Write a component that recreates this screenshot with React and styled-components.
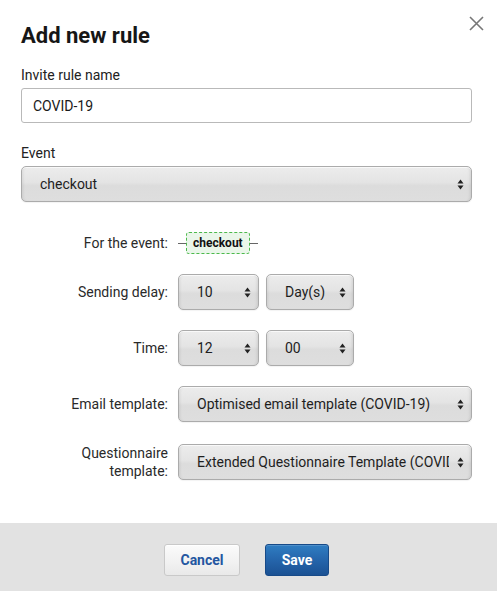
import React from "react";
import styled, { createGlobalStyle } from "styled-components";

const Global = createGlobalStyle`
  html, body { margin: 0; padding: 0; background: #fff; }
  body { font-family: Roboto, "Liberation Sans", Arial, sans-serif; color: #222; }
  * { box-sizing: border-box; }
`;

const Dialog = styled.div`
  position: relative;
  width: 497px;
  min-height: 591px;
  display: flex;
  flex-direction: column;
  background: #fff;
`;

const Body = styled.div`
  flex: 1;
  padding: 23px 25px 43px 21px;
  display: flex;
  flex-direction: column;
`;

const Title = styled.h1`
  margin: 0;
  font-size: 22px;
  line-height: 26px;
  font-weight: 700;
  color: #161616;
`;

const CloseButton = styled.button`
  position: absolute;
  top: 15px;
  right: 13px;
  width: 16px;
  height: 16px;
  padding: 0;
  border: 0;
  background: none;
  display: flex;
  align-items: center;
  justify-content: center;
  cursor: pointer;
`;

const FieldLabel = styled.label`
  display: block;
  margin-top: ${(p) => p.$top}px;
  font-size: 14px;
  line-height: 16px;
  color: #222;
`;

const TextInput = styled.input`
  margin-top: 5px;
  width: 100%;
  height: 35px;
  border: 1px solid #b9b9b9;
  border-radius: 3px;
  padding: 0 11px;
  font-family: inherit;
  font-size: 14px;
  color: #1a1a1a;
  background: #fff;
  outline: none;
`;

const SelectBox = styled.div`
  margin-top: ${(p) => p.$top || 0}px;
  width: ${(p) => (p.$width ? `${p.$width}px` : "100%")};
  min-width: 0;
  height: 36px;
  display: flex;
  align-items: center;
  justify-content: space-between;
  gap: 8px;
  padding: 0 7px 0 18px;
  border: 1px solid #ababab;
  border-radius: 5px;
  background: linear-gradient(to bottom, #ececec 0%, #e4e4e4 45%, #dcdcdc 55%, #dedede 100%);
  box-shadow: inset 0 1px 0 rgba(255, 255, 255, 0.7), inset 3px 0 3px -2px rgba(0, 0, 0, 0.08),
    inset -3px 0 3px -2px rgba(0, 0, 0, 0.1), 0 1px 1px rgba(0, 0, 0, 0.05);
  font-size: 14px;
  color: #1e1e1e;
  cursor: default;
`;

const SelectText = styled.span`
  flex: 1;
  min-width: 0;
  white-space: nowrap;
  overflow: hidden;
  text-overflow: clip;
`;

const Arrows = () => (
  <svg width="7" height="11" viewBox="0 0 7 11" aria-hidden="true">
    <path d="M3.5 0.5 L6.5 4.5 L0.5 4.5 Z" fill="#222" />
    <path d="M3.5 10.5 L6.5 6.5 L0.5 6.5 Z" fill="#222" />
  </svg>
);

const Select = ({ value, width, top }) => (
  <SelectBox $width={width} $top={top}>
    <SelectText>{value}</SelectText>
    <Arrows />
  </SelectBox>
);

const FormGrid = styled.div`
  margin-top: 30px;
  display: grid;
  grid-template-columns: 147px minmax(0, 1fr);
  column-gap: 10px;
  row-gap: 20px;
  align-items: center;
`;

const RowLabel = styled.div`
  text-align: right;
  font-size: 14px;
  line-height: 18px;
  color: #2a2a2a;
  margin-top: ${(p) => p.$top || 0}px;
`;

const Inline = styled.div`
  display: flex;
  align-items: center;
  gap: 7px;
`;

const EventTag = styled.div`
  display: flex;
  align-items: center;
  height: 22px;
`;

const Connector = styled.span`
  width: 8px;
  height: 1px;
  background: #666;
`;

const Badge = styled.span`
  height: 22px;
  display: inline-flex;
  align-items: center;
  padding: 0 6px;
  border: 1px dashed #4cb94c;
  border-radius: 3px;
  background: #eaf6ea;
  font-size: 12px;
  font-weight: 700;
  color: #111;
`;

const Footer = styled.div`
  height: 70px;
  background: #e2e2e2;
  display: flex;
  justify-content: center;
  align-items: flex-start;
  padding: 21px 4px 0 0;
  gap: 25px;
`;

const Button = styled.button`
  height: 32px;
  width: ${(p) => p.$width}px;
  border-radius: 3px;
  font-family: inherit;
  font-size: 14px;
  font-weight: 700;
  cursor: pointer;
  border: 1px solid ${(p) => (p.$primary ? "#174a88" : "#c9c9c9")};
  color: ${(p) => (p.$primary ? "#fff" : "#2456a0")};
  background: ${(p) =>
    p.$primary
      ? "linear-gradient(to bottom, #2f7dc2 0%, #2565ab 50%, #1b5193 100%)"
      : "linear-gradient(to bottom, #fbfbfb 0%, #f1f1f1 60%, #e9e9e9 100%)"};
  box-shadow: ${(p) => (p.$primary ? "inset 0 1px 0 rgba(255,255,255,0.15)" : "inset 0 1px 0 #fff")};
`;

export default function App() {
  return (
    <>
      <Global />
      <Dialog>
        <CloseButton aria-label="Close">
          <svg width="15" height="15" viewBox="0 0 15 15">
            <path d="M1 1 L14 14 M14 1 L1 14" stroke="#777" strokeWidth="1.6" fill="none" />
          </svg>
        </CloseButton>
        <Body>
          <Title>Add new rule</Title>
          <FieldLabel $top={18}>Invite rule name</FieldLabel>
          <TextInput defaultValue="COVID-19" />
          <FieldLabel $top={22}>Event</FieldLabel>
          <Select value="checkout" top={5} />
          <FormGrid>
            <RowLabel>For the event:</RowLabel>
            <EventTag>
              <Connector />
              <Badge>checkout</Badge>
              <Connector />
            </EventTag>

            <RowLabel>Sending delay:</RowLabel>
            <Inline>
              <Select value="10" width={81} />
              <Select value="Day(s)" width={88} />
            </Inline>

            <RowLabel>Time:</RowLabel>
            <Inline>
              <Select value="12" width={81} />
              <Select value="00" width={88} />
            </Inline>

            <RowLabel>Email template:</RowLabel>
            <Select value="Optimised email template (COVID-19)" />

            <RowLabel $top={2}>
              Questionnaire
              <br />
              template:
            </RowLabel>
            <Select value="Extended Questionnaire Template (COVID-19)" top={2} />
          </FormGrid>
        </Body>
        <Footer>
          <Button $width={76}>Cancel</Button>
          <Button $width={64} $primary>
            Save
          </Button>
        </Footer>
      </Dialog>
    </>
  );
}
